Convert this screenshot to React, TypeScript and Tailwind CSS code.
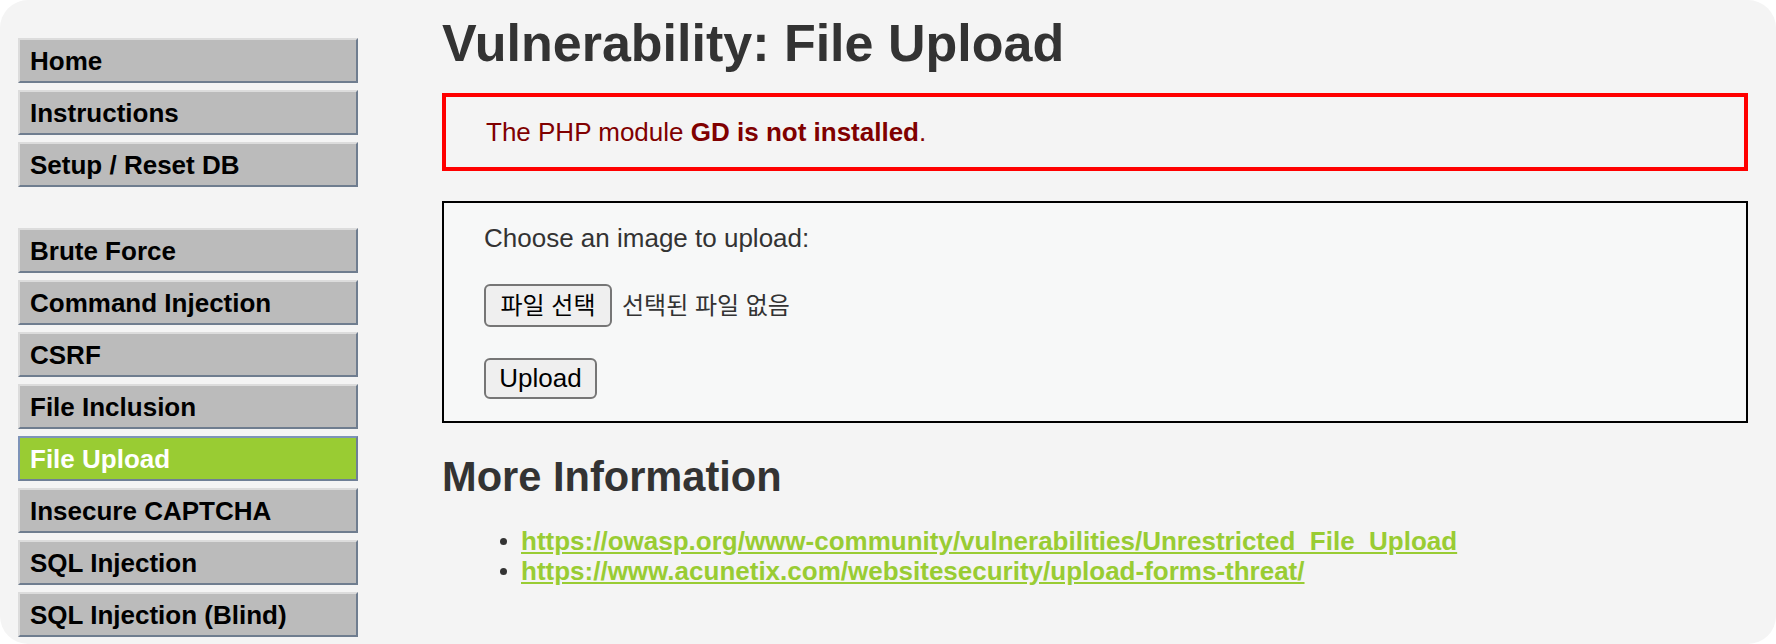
const menuTop = ["Home", "Instructions", "Setup / Reset DB"];

const menuVulns = [
  "Brute Force",
  "Command Injection",
  "CSRF",
  "File Inclusion",
  "File Upload",
  "Insecure CAPTCHA",
  "SQL Injection",
  "SQL Injection (Blind)",
];

const links = [
  "https://owasp.org/www-community/vulnerabilities/Unrestricted_File_Upload",
  "https://www.acunetix.com/websitesecurity/upload-forms-threat/",
];

function MenuItem({ label, selected }: { label: string; selected?: boolean }) {
  return (
    <li
      className={`flex h-[45px] items-center border-2 pl-[10px] text-[26px] font-bold leading-[30px] ${
        selected
          ? "border-t-[#7d93b8] border-l-[#7d93b8] border-b-[#6f7f96] border-r-[#6f7f96] bg-[#99cc33] text-white"
          : "border-t-[#dcdcdc] border-l-[#dcdcdc] border-b-[#6f7d8f] border-r-[#6f7d8f] bg-[#bbbbbb] text-black"
      }`}
    >
      {label}
    </li>
  );
}

export default function App() {
  return (
    <div className="h-[644px] w-[1776px] bg-white font-['Liberation_Sans',Arial,Helvetica,sans-serif]">
      <div className="flex h-[644px] overflow-hidden rounded-[28px] bg-[#f4f4f4]">
        {/* left menu */}
        <nav className="w-[358px] shrink-0 pl-[18px] pt-[38px]">
          <ul className="flex flex-col gap-[7px]">
            {menuTop.map((m) => (
              <MenuItem key={m} label={m} />
            ))}
          </ul>
          <ul className="mt-[41px] flex flex-col gap-[7px]">
            {menuVulns.map((m) => (
              <MenuItem key={m} label={m} selected={m === "File Upload"} />
            ))}
          </ul>
        </nav>

        {/* main body */}
        <main className="ml-[84px] mr-[28px] flex-1 pt-[13px] text-[#333]">
          <h1 className="text-[52px] font-bold leading-[60px] text-[#333]">
            Vulnerability: File Upload
          </h1>

          <div className="mt-[20px] border-4 border-[#ff0000] py-[20px] pl-[40px] text-[26px] leading-[30px] text-[#800000]">
            The PHP module <span className="font-bold">GD is not installed</span>.
          </div>

          <div className="mt-[30px] border-2 border-black bg-[#f7f8f8] pb-[22px] pl-[40px] pt-[20px]">
            <p className="text-[26px] leading-[30px] text-[#333]">Choose an image to upload:</p>
            <div className="mt-[31px] flex items-center gap-[10px]">
              <button className="flex h-[43px] w-[128px] items-center justify-center rounded-[6px] border-2 border-[#767676] bg-[#efefef] font-['Liberation_Sans','Noto_Sans_CJK_KR',sans-serif] text-[24px] text-black">
                파일 선택
              </button>
              <span className="font-['Liberation_Sans','Noto_Sans_CJK_KR',sans-serif] text-[24px] text-[#333]">
                선택된 파일 없음
              </span>
            </div>
            <button className="mt-[31px] flex h-[41px] w-[113px] items-center justify-center rounded-[6px] border-2 border-[#767676] bg-[#efefef] text-[26px] text-black">
              Upload
            </button>
          </div>

          <h2 className="mt-[30px] text-[41.6px] font-bold leading-[48px] text-[#333]">
            More Information
          </h2>
          <ul className="mt-[25px]">
            {links.map((l) => (
              <li key={l} className="flex h-[30px] items-center">
                <span className="ml-[58px] h-[7px] w-[7px] rounded-full bg-[#333]" />
                <a
                  href="#"
                  className="ml-[14px] text-[26px] font-bold leading-[30px] text-[#99cc33] underline"
                >
                  {l}
                </a>
              </li>
            ))}
          </ul>
        </main>
      </div>
    </div>
  );
}
